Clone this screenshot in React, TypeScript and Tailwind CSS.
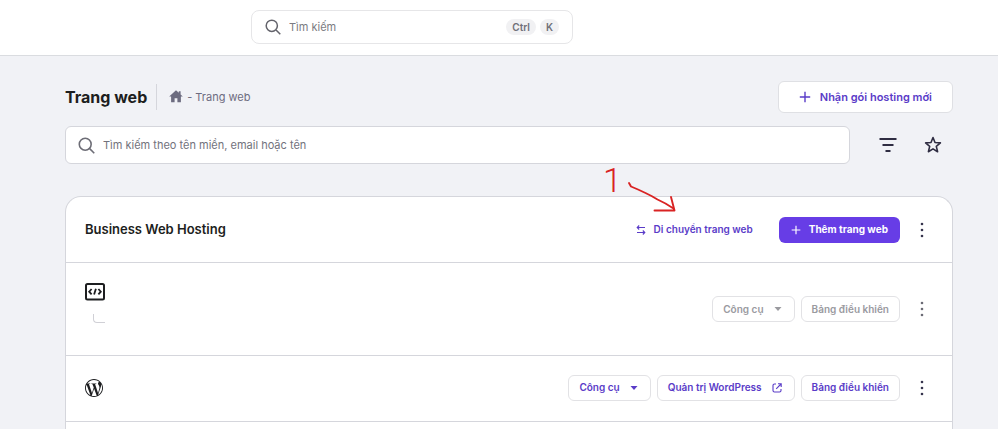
import React from 'react';
import clsx from 'clsx';
import { SiWordpress } from 'react-icons/si';

type IconProps = { className?: string };

function SearchIcon({ className }: IconProps) {
  return (
    <svg viewBox="0 0 16 16" fill="none" stroke="currentColor" strokeWidth="1.5" className={className} aria-hidden="true">
      <circle cx="6.8" cy="6.8" r="5.6" />
      <path d="M11 11l4.3 4.3" />
    </svg>
  );
}

function PlusIcon({ className }: IconProps) {
  return (
    <svg viewBox="0 0 12 12" fill="none" stroke="currentColor" strokeWidth="1.4" className={className} aria-hidden="true">
      <path d="M6 .8v10.4M.8 6h10.4" />
    </svg>
  );
}

function HomeIcon({ className }: IconProps) {
  return (
    <svg viewBox="0 0 14 14" fill="currentColor" className={className} aria-hidden="true">
      <path d="M7 .2L.2 6.400h1.900v5.800h3.500V8.200h2.800v4h3.500V6.400h1.900l-2.200-2V1.300H9.800v1.400z" />
    </svg>
  );
}

function FilterIcon({ className }: IconProps) {
  return (
    <svg viewBox="0 0 18 14" fill="none" stroke="currentColor" strokeWidth="1.8" className={className} aria-hidden="true">
      <path d="M.5 1h17M3.5 7h11M6.5 13h5" />
    </svg>
  );
}

function StarIcon({ className }: IconProps) {
  return (
    <svg viewBox="0 0 18 18" fill="none" stroke="currentColor" strokeWidth="1.6" strokeLinejoin="round" className={className} aria-hidden="true">
      <path d="M9 1.5l2 5 5.4.4-4.1 3.5 1.3 5.3L9 12.900l-4.600 2.800 1.300-5.300L1.600 6.900 7 6.500z" />
    </svg>
  );
}

function SwapIcon({ className }: IconProps) {
  return (
    <svg viewBox="0 0 10 10" fill="none" stroke="currentColor" strokeWidth="1.1" className={className} aria-hidden="true">
      <path d="M9 2.5H1.5M3.2.5l-2 2 2 2M1 7.5h7.5M6.8 5.500l2 2-2 2" />
    </svg>
  );
}

function CodeIcon({ className }: IconProps) {
  return (
    <svg viewBox="0 0 20 18" fill="none" stroke="currentColor" className={className} aria-hidden="true">
      <rect x="1" y="1" width="18" height="15.5" rx="1.5" strokeWidth="2" />
      <path d="M6.6 6L4.2 8.700l2.400 2.700M13.400 6l2.400 2.700-2.400 2.700M10.900 5.800l-1.800 5.800" strokeWidth="1.8" />
    </svg>
  );
}

function ExternalIcon({ className }: IconProps) {
  return (
    <svg viewBox="0 0 10 10" fill="none" stroke="currentColor" strokeWidth="1.1" className={className} aria-hidden="true">
      <path d="M4 1H2.500A1.500 1.500 0 001 2.500v5A1.500 1.500 0 002.500 9h5A1.500 1.500 0 009 7.500V6M6 .8h3.200V4M9 1L4.200 5.800" />
    </svg>
  );
}

function CaretIcon({ className }: IconProps) {
  return (
    <svg viewBox="0 0 8 4" fill="currentColor" className={className} aria-hidden="true">
      <path d="M.5 0h7L4 4z" />
    </svg>
  );
}

function MoreButton({ muted = false }: { muted?: boolean }) {
  return (
    <button
      type="button"
      aria-label="Thêm tùy chọn"
      className={clsx('ml-3 flex h-6 w-5 items-center justify-center', muted ? 'text-[#6b6b75]' : 'text-[#36344d]')}
    >
      <svg viewBox="0 0 4 16" fill="currentColor" className="h-4 w-1" aria-hidden="true">
        <circle cx="2" cy="2" r="1.3" />
        <circle cx="2" cy="8" r="1.3" />
        <circle cx="2" cy="14" r="1.3" />
      </svg>
    </button>
  );
}

type ActionButtonProps = {
  children: React.ReactNode;
  disabled?: boolean;
};

function ActionButton({ children, disabled = false }: ActionButtonProps) {
  return (
    <button
      type="button"
      disabled={disabled}
      className={clsx(
        'flex h-[26px] items-center gap-2 rounded-md border border-[#e2e2e5] bg-white px-[10px] text-[10px] font-semibold whitespace-nowrap',
        disabled ? 'text-[#9a9a9f]' : 'text-[#5a3cc8]'
      )}
    >
      {children}
    </button>
  );
}

function TopBar() {
  return (
    <header className="border-b border-[#dadce0] bg-white pt-[10px] pb-[11px]">
      <div className="ml-[25.15%] flex h-[34px] w-[322px] items-center rounded-lg border border-[#e6e6e8] px-[13px]">
        <SearchIcon className="mr-2 h-4 w-4 shrink-0 text-[#63636b]" />
        <input
          type="search"
          aria-label="Tìm kiếm"
          placeholder="Tìm kiếm"
          className="min-w-0 flex-1 bg-transparent text-[11px] outline-none placeholder:text-[#7b7b82]"
        />
        <kbd className="mr-1 rounded-lg bg-[#f1f1f3] px-[6px] font-[Inter,sans-serif] text-[10px] leading-4 font-semibold text-[#707078]">Ctrl</kbd>
        <kbd className="rounded-lg bg-[#f1f1f3] px-[6px] font-[Inter,sans-serif] text-[10px] leading-4 font-semibold text-[#707078]">K</kbd>
      </div>
    </header>
  );
}

function PageHeader() {
  return (
    <div className="flex h-8 items-center">
      <h1 className="text-base font-bold text-[#1d1e20]">Trang web</h1>
      <nav aria-label="Breadcrumb" className="ml-[9px] flex h-[26px] items-center border-l border-[#d5d6dc] pl-3 text-[11px] text-[#6d6c80]">
        <a href="#" aria-label="Trang chủ">
          <HomeIcon className="h-[14px] w-[14px]" />
        </a>
        <span className="ml-1">- Trang web</span>
      </nav>
      <button
        type="button"
        className="ml-auto flex h-8 items-center gap-[9px] rounded-md border border-[#dfe0e4] bg-white px-5 text-[11px] font-semibold text-[#5a3cc8]"
      >
        <PlusIcon className="h-3 w-3" />
        Nhận gói hosting mới
      </button>
    </div>
  );
}

function SiteSearch() {
  return (
    <div className="mt-[13px] flex items-center">
      <div className="flex h-[38px] flex-1 items-center rounded-md border border-[#d5d6dc] bg-white px-3">
        <SearchIcon className="mr-2 h-[17px] w-[17px] shrink-0 text-[#6d6d76]" />
        <input
          type="search"
          aria-label="Tìm kiếm trang web"
          placeholder="Tìm kiếm theo tên miền, email hoặc tên"
          className="min-w-0 flex-1 bg-transparent text-[11px] outline-none placeholder:text-[#72727c]"
        />
      </div>
      <button type="button" aria-label="Bộ lọc" className="ml-[26px] flex h-8 w-6 items-center justify-center text-[#2f2d42]">
        <FilterIcon className="h-[14px] w-[18px]" />
      </button>
      <button type="button" aria-label="Yêu thích" className="mr-2 ml-[21px] flex h-8 w-6 items-center justify-center text-[#2f2d42]">
        <StarIcon className="h-[18px] w-[18px]" />
      </button>
    </div>
  );
}

// hand-drawn step marker pointing at the migrate button
function StepMarker() {
  return (
    <div className="pointer-events-none absolute top-[162px] left-[603px] flex text-[#d92323]">
      <span className="font-[Roboto,sans-serif] text-[34px] leading-9 font-light">1</span>
      <svg
        viewBox="0 0 54 50"
        className="ml-[3px] h-[50px] w-[54px]"
        fill="none"
        stroke="currentColor"
        strokeLinecap="round"
        strokeLinejoin="round"
        strokeWidth="1.9"
        aria-hidden="true"
      >
        <path d="M4 21l2 3.500 7 3 7.500 3.500 6 3 6 3.500 8 4 8 5M46 35l3.500 13.500H29.500" />
      </svg>
    </div>
  );
}

export default function App() {
  return (
    <div className="relative flex h-screen flex-col overflow-hidden bg-[#f1f2f6] font-[Inter,'Noto_Sans',sans-serif] text-[#1d1e20]">
      <TopBar />
      <main className="flex flex-1 flex-col pt-[25px] pr-[45px] pl-[65px]">
        <PageHeader />
        <SiteSearch />

        <section className="mt-8 flex-1 rounded-t-2xl border border-b-0 border-[#d5d6dc] bg-white">
          <div className="flex h-[66px] items-center border-b border-[#d5d6dc] pr-5 pl-[19px]">
            <h2 className="text-[13px] font-semibold">Business Web Hosting</h2>
            <button
              type="button"
              className="mr-[26px] ml-auto flex items-center gap-2 text-[10px] font-semibold text-[#5a3cc8]"
            >
              <SwapIcon className="h-[10px] w-[10px]" />
              Di chuyển trang web
            </button>
            <button
              type="button"
              className="flex h-[26px] items-center gap-2 rounded-md bg-[#673de6] px-3 text-[10px] font-bold text-white"
            >
              <PlusIcon className="h-[10px] w-[10px]" />
              Thêm trang web
            </button>
            <MoreButton />
          </div>

          <ul>
            <li className="flex h-[93px] items-center border-b border-[#d5d6dc] pr-5 pl-[19px]">
              <div className="self-start pt-5">
                <CodeIcon className="h-[18px] w-5" />
                <div className="mt-[13px] ml-2 h-[9px] w-3 rounded-bl-sm border-b border-l border-[#d0d0d6]" />
              </div>
              <div className="ml-auto flex gap-[6px]">
                <ActionButton disabled>
                  Công cụ
                  <CaretIcon className="mx-0.5 h-1 w-2" />
                </ActionButton>
                <ActionButton disabled>Bảng điều khiển</ActionButton>
              </div>
              <MoreButton muted />
            </li>
            <li className="flex h-[66px] items-center border-b border-[#d5d6dc] pr-5 pb-0.5 pl-[19px]">
              <SiWordpress className="h-[18px] w-[18px]" aria-label="WordPress" />
              <div className="ml-auto flex gap-[6px]">
                <ActionButton>
                  Công cụ
                  <CaretIcon className="mx-0.5 h-1 w-2" />
                </ActionButton>
                <ActionButton>
                  Quản trị WordPress
                  <ExternalIcon className="mx-0.5 h-[10px] w-[10px]" />
                </ActionButton>
                <ActionButton>Bảng điều khiển</ActionButton>
              </div>
              <MoreButton />
            </li>
          </ul>
        </section>
      </main>
      <StepMarker />
    </div>
  );
}
